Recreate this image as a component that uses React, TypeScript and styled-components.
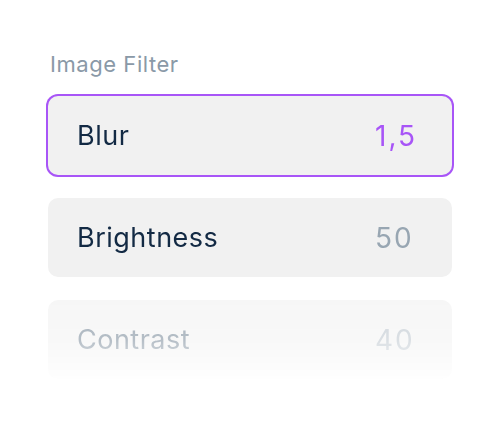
import React from "react";
import styled, { createGlobalStyle } from "styled-components";

const Global = createGlobalStyle`
  html, body { margin: 0; padding: 0; background: #ffffff; }
  body { font-family: Inter, "Noto Sans", sans-serif; }
`;

const Page = styled.div`
  width: 500px;
  height: 425px;
  box-sizing: border-box;
  padding: 50px 48px 0 48px;
  display: flex;
  flex-direction: column;
`;

const Heading = styled.div`
  font-size: 22px;
  line-height: 28px;
  color: #8a99a7;
  padding-left: 2px;
  margin-bottom: 16px;
  letter-spacing: 0.55px;
`;

const List = styled.div`
  display: flex;
  flex-direction: column;
  gap: 23px;
  padding: 2px;
  margin: 0 -2px;
  -webkit-mask-image: linear-gradient(
    to bottom,
    #000 0px,
    #000 190px,
    rgba(0, 0, 0, 0.62) 206px,
    rgba(0, 0, 0, 0.5) 246px,
    rgba(0, 0, 0, 0) 292px
  );
  mask-image: linear-gradient(
    to bottom,
    #000 0px,
    #000 190px,
    rgba(0, 0, 0, 0.62) 206px,
    rgba(0, 0, 0, 0.5) 246px,
    rgba(0, 0, 0, 0) 292px
  );
`;

const Row = styled.div<{ $active?: boolean }>`
  height: 79px;
  box-sizing: border-box;
  border-radius: 10px;
  background: #f1f1f1;
  display: grid;
  grid-template-columns: 1fr 48px;
  align-items: center;
  padding: 0 29px 0 29px;
  box-shadow: ${(p) => (p.$active ? "0 0 0 2px #a855f7" : "none")};
`;

const Name = styled.span<{ $dim?: boolean }>`
  font-size: 27px;
  color: ${(p) => (p.$dim ? "#6c7e8f" : "#132a44")};
  letter-spacing: 0.5px;
`;

const Value = styled.span<{ $active?: boolean; $dim?: boolean }>`
  font-size: 28px;
  letter-spacing: 2px;
  white-space: nowrap;
  color: ${(p) => (p.$active ? "#a855f7" : p.$dim ? "#b5bfc8" : "#98a6b2")};
`;

const items = [
  { name: "Blur", value: "1,5", active: true, dim: false },
  { name: "Brightness", value: "50", active: false, dim: false },
  { name: "Contrast", value: "40", active: false, dim: true },
];

export default function App() {
  return (
    <Page>
      <Global />
      <Heading>Image Filter</Heading>
      <List>
        {items.map((it) => (
          <Row key={it.name} $active={it.active}>
            <Name $dim={it.dim}>{it.name}</Name>
            <Value $active={it.active} $dim={it.dim}>
              {it.value}
            </Value>
          </Row>
        ))}
      </List>
    </Page>
  );
}
